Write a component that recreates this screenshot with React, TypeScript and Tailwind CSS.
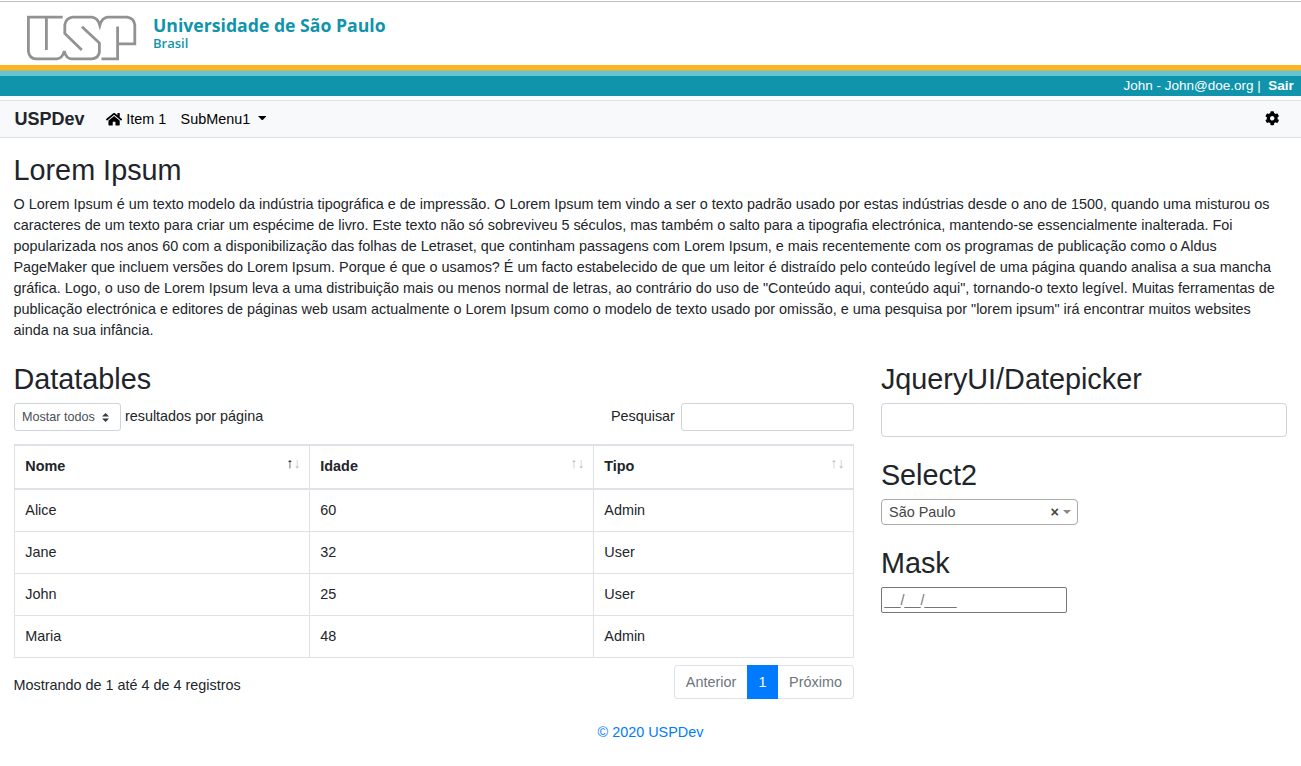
import React from "react";
import { FaCog } from "react-icons/fa";

const people = [
  ["Alice", "60", "Admin"],
  ["Jane", "32", "User"],
  ["John", "25", "User"],
  ["Maria", "48", "Admin"],
];

const columns = ["Nome", "Idade", "Tipo"];

function Logo() {
  return (
    <svg className="h-[46px] w-[112px]" viewBox="26 15 112 46" fill="none" stroke="#929292" strokeWidth="2.8">
      <path d="M62.7 17.2H28.4V51.5Q29.4 58.6 36 58.8H57Q62.5 58.2 64.3 51Q66 58.2 71 58.8H92Q98.6 58.2 99.4 52V43L82 26.8" />
      <path d="M46.4 17.2V50" />
      <path d="M81.8 50L64.8 33.5V25Q66 18 72.5 17.2H92Q97.8 18 99.8 25.3Q101.8 18 107.5 17.2H127Q134 18 134.8 25V43.8H118.5" />
      <path d="M117.6 26.5V58.8H101.5" />
    </svg>
  );
}

function HomeIcon() {
  return (
    <svg className="h-[14.4px] w-[16.2px]" viewBox="0 0 576 512" fill="currentColor">
      <path d="M488 312.7V456c0 13.3-10.7 24-24 24H348c-6.6 0-12-5.4-12-12V356c0-6.6-5.4-12-12-12h-72c-6.6 0-12 5.4-12 12v112c0 6.6-5.4 12-12 12H112c-13.3 0-24-10.7-24-24V312.7c0-3.6 1.6-7 4.4-9.3l188-154.8c4.4-3.6 10.8-3.6 15.3 0l188 154.8c2.7 2.3 4.3 5.7 4.3 9.3zm83.6-60.9L488 182.9V44.4c0-6.6-5.4-12-12-12h-56c-6.6 0-12 5.4-12 12V117l-89.5-73.7c-17.7-14.6-43.3-14.6-61 0L4.4 251.8c-5.1 4.2-5.8 11.8-1.6 16.9l25.5 31c4.2 5.1 11.8 5.8 16.9 1.6l235.2-193.7c4.4-3.6 10.8-3.6 15.3 0l235.2 193.7c5.1 4.2 12.7 3.5 16.9-1.6l25.5-31c4.2-5.2 3.4-12.7-1.7-16.9z" />
    </svg>
  );
}

function Header() {
  return (
    <header>
      <div className="mt-px flex h-16 border-t border-[#bfbfbf] pl-[26px] pt-[13px]">
        <Logo />
        <div className="ml-[15px] font-['Open_Sans',sans-serif] font-bold text-[#1094ab]">
          <div className="text-[17.65px] leading-[20px]">Universidade de São Paulo</div>
          <div className="mt-px text-[13px] leading-[15px]">
            <span className="font-semibold">Brasil</span>
          </div>
        </div>
      </div>
      <div className="h-[5px] bg-[#fcb421]" />
      <div className="h-px bg-[#b5b877]" />
      <div className="h-[5px] bg-[#64c4d2]" />
      <div className="flex h-5 items-center justify-end bg-[#1094ab] pr-[7.2px] text-[13.5px] leading-5 text-white">
        <span className="whitespace-pre">John - John@doe.org |{"  "}</span>
        <span className="font-bold">Sair</span>
      </div>
    </header>
  );
}

function Navbar() {
  return (
    <nav className="mt-1 flex h-[38px] items-center border-y border-[#dee2e6] bg-[#f8f9fa] pl-[14.4px] pr-[22px] text-black">
      <span className="text-[18px] font-bold leading-[27px] text-[#212529]">USPDev</span>
      <span className="ml-[21.6px] flex items-center">
        <HomeIcon />
        <span className="ml-1">Item 1</span>
      </span>
      <span className="ml-[14.4px] flex items-center">
        SubMenu1
        <svg className="ml-[7.6px] -mt-[2px] h-[4.5px] w-[8.6px]" viewBox="0 0 86 45">
          <path d="M0 0H86L43 45z" />
        </svg>
      </span>
      <FaCog className="-mt-px ml-auto h-[14.4px] w-[14.4px]" />
    </nav>
  );
}

function Heading({ children }: { children: React.ReactNode }) {
  return <h2 className="mb-[7px] text-[28.8px] leading-[34px]">{children}</h2>;
}

function PeopleTable() {
  return (
    <table className="mt-[13px] w-[839.5px] table-fixed border-collapse border border-[#dee2e6]">
      <colgroup>
        <col className="w-[295px]" />
        <col className="w-[284px]" />
        <col className="w-[260px]" />
      </colgroup>
      <thead>
        <tr className="h-[44px]">
          {columns.map((name, i) => (
            <th key={name} className="border border-y-2 border-[#dee2e6] px-[10.8px] pb-[2px] pt-0 text-left">
              <div className="flex justify-between">
                <span>{name}</span>
                <span className="-mr-[3px] -mt-[3px] flex font-['Liberation_Serif',serif] font-normal">
                  <span className={i === 0 ? "" : "opacity-30"}>↑</span>
                  <span className="opacity-30">↓</span>
                </span>
              </div>
            </th>
          ))}
        </tr>
      </thead>
      <tbody>
        {people.map((row) => (
          <tr key={row[0]} className="h-[42px]">
            {row.map((cell) => (
              <td key={cell} className="border border-[#dee2e6] px-[10.8px] py-0">
                {cell}
              </td>
            ))}
          </tr>
        ))}
      </tbody>
    </table>
  );
}

function Datatables() {
  return (
    <section className="w-[840px]">
      <Heading>Datatables</Heading>
      <div className="flex h-7 items-center">
        <div className="flex h-7 w-[107px] items-center justify-between rounded-[3px] border border-[#ced4da] pl-[7.4px] pr-[10.5px] text-[12.6px] text-[#495057]">
          Mostar todos
          <svg className="h-[9px] w-[7.2px]" viewBox="0 0 4 5" fill="#343a40">
            <path d="M2 0L0 2h4zm0 5L0 3h4z" />
          </svg>
        </div>
        <span className="ml-[4.4px] -mt-[2px]">resultados por página</span>
        <span className="ml-auto -mt-[2px]">Pesquisar</span>
        <input aria-label="Pesquisar" className="ml-[5.6px] h-7 w-[173px] rounded-[3px] border border-[#ced4da]" />
      </div>
      <PeopleTable />
      <div className="mt-[7px] flex h-[34px] justify-between">
        <span className="mt-[10px]">Mostrando de 1 até 4 de 4 registros</span>
        <div className="flex leading-[32px] text-[#6c757d]">
          <span className="w-[73px] rounded-l-[4px] border border-r-0 border-[#dee2e6] pl-px text-center">
            Anterior
          </span>
          <span className="w-[31px] border border-[#007bff] bg-[#007bff] pl-px text-center text-white">1</span>
          <span className="w-[76px] rounded-r-[4px] border border-l-0 border-[#dee2e6] pl-px text-center">
            Próximo
          </span>
        </div>
      </div>
    </section>
  );
}

function Widgets() {
  return (
    <section className="w-[406px]">
      <Heading>JqueryUI/Datepicker</Heading>
      <input aria-label="Data" className="block h-[34px] w-full rounded-[4px] border border-[#ced4da]" />
      <div className="mt-[21px]">
        <Heading>Select2</Heading>
      </div>
      <div className="flex h-[26px] w-[197px] items-center rounded-[4px] border border-[#aaa] pl-[7.2px] pr-[6px] text-[#444]">
        São Paulo
        <span className="ml-auto font-bold">×</span>
        <svg className="ml-1 h-[4px] w-[8px]" viewBox="0 0 8 4" fill="#888">
          <path d="M0 0H8L4 4z" />
        </svg>
      </div>
      <div className="mt-[21px]">
        <Heading>Mask</Heading>
      </div>
      <input
        aria-label="Máscara"
        placeholder="__/__/____"
        className="block h-[26px] w-[186px] rounded-[2px] border border-[#767676] px-[2.5px] placeholder:text-[#757575]"
      />
    </section>
  );
}

export default function App() {
  return (
    <div className="h-[766px] w-[1301px] overflow-hidden bg-white font-['Liberation_Sans',Arial,sans-serif] text-[14.4px] leading-[21px] text-[#212529]">
      <Header />
      <Navbar />
      <main className="pl-[13.5px] pr-[14px] pt-[15px]">
        <Heading>Lorem Ipsum</Heading>
        <p className="w-[1273px]">
          O Lorem Ipsum é um texto modelo da indústria tipográfica e de impressão. O Lorem Ipsum tem vindo a ser o texto
          padrão usado por estas indústrias desde o ano de 1500, quando uma misturou os caracteres de um texto para
          criar um espécime de livro. Este texto não só sobreviveu 5 séculos, mas também o salto para a tipografia
          electrónica, mantendo-se essencialmente inalterada. Foi popularizada nos anos 60 com a disponibilização das
          folhas de Letraset, que continham passagens com Lorem Ipsum, e mais recentemente com os programas de
          publicação como o Aldus PageMaker que incluem versões do Lorem Ipsum. Porque é que o usamos? É um facto
          estabelecido de que um leitor é distraído pelo conteúdo legível de uma página quando analisa a sua mancha
          gráfica. Logo, o uso de Lorem Ipsum leva a uma distribuição mais ou menos normal de letras, ao contrário do
          uso de "Conteúdo aqui, conteúdo aqui", tornando-o texto legível. Muitas ferramentas de publicação electrónica
          e editores de páginas web usam actualmente o Lorem Ipsum como o modelo de texto usado por omissão, e uma
          pesquisa por "lorem ipsum" irá encontrar muitos websites ainda na sua infância.
        </p>
        <div className="mt-[21px] flex gap-[27.4px]">
          <Datatables />
          <Widgets />
        </div>
      </main>
      <footer className="mt-[23px] text-center text-[#007bff]">© 2020 USPDev</footer>
    </div>
  );
}
